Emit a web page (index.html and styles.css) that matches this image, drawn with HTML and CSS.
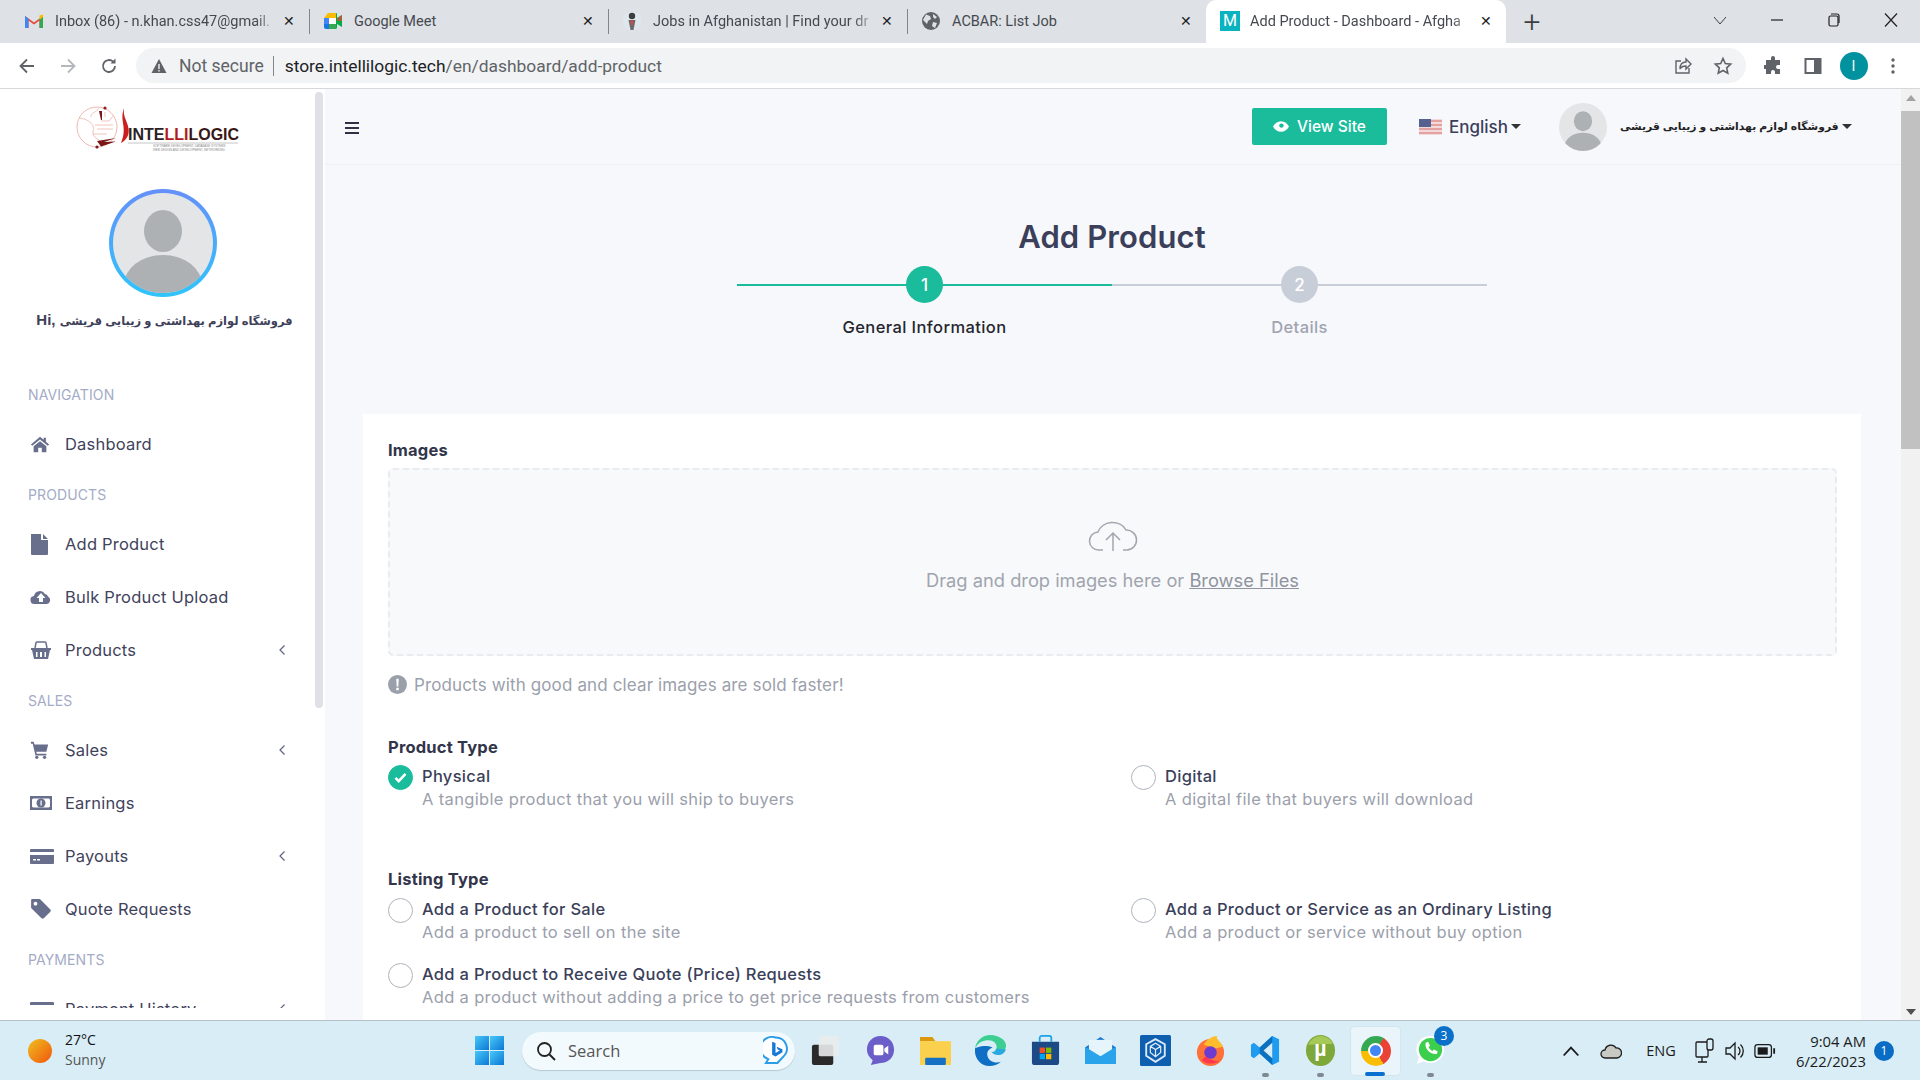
FILE: index.html
```html
<!DOCTYPE html>
<html lang="en">
<head>
<meta charset="utf-8">
<title>Add Product - Dashboard</title>
<link rel="stylesheet" href="styles.css">
</head>
<body>
<div class="screen">
  <div class="tabstrip">
    <div class="tab">
      <svg class="fav" viewBox="0 0 20 16"><path d="M1 15V3l9 6.500L19 3v12h-3.500V7.500L10 11.500 4.500 7.500V15z" fill="#ea4335"/><path d="M1 15V3l3.500 2.500V15z" fill="#4285f4"/><path d="M19 15V3l-3.500 2.500V15z" fill="#34a853"/><path d="M15.500 2.500L19 1.500V4l-3.500 2.800z" fill="#fbbc04"/></svg>
      <span class="tab-title tab-fade">Inbox (86) - n.khan.css47@gmail.</span><span class="tab-x">✕</span>
    </div>
    <div class="tab">
      <svg class="fav" viewBox="0 0 20 18"><path d="M5 1h8v5H1z" fill="#fbbc04"/><path d="M1 6h5v6H1z" fill="#4285f4"/><path d="M1 12h5v5H3a2 2 0 0 1-2-2z" fill="#1a73e8"/><path d="M6 12h7v5H6z" fill="#34a853"/><path d="M13 1a1 1 0 0 1 1 1v4l5-3v12l-5-3v3a2 2 0 0 1-1 2z" fill="#00ac47"/><path d="M6 6h7v6H6z" fill="#fff"/><path d="M14 6l5-3v6h-5z" fill="#ea4335" opacity=".7"/></svg>
      <span class="tab-title">Google Meet</span><span class="tab-x">✕</span>
    </div>
    <div class="tab">
      <svg class="fav" viewBox="0 0 20 20"><circle cx="10" cy="10" r="9.500" fill="#dfe7ee"/><circle cx="10" cy="5" r="3.200" fill="#3c3c3c"/><path d="M6.500 9h7l-1 5-1 5h-3l-1-5z" fill="#6b6b6b"/><path d="M9 9h2v5H9z" fill="#d94040"/></svg>
      <span class="tab-title tab-fade">Jobs in Afghanistan | Find your dr</span><span class="tab-x">✕</span>
    </div>
    <div class="tab">
      <svg class="fav" viewBox="0 0 20 20"><circle cx="10" cy="10" r="9" fill="#5f6368"/><path d="M5 3.500l4 1.500 1 3-3 2-1 3-4-4zM12 11l4 1-2 5-3-2zM12 3l4 3-2 2-2-2z" fill="#dee1e6"/></svg>
      <span class="tab-title">ACBAR: List Job</span><span class="tab-x">✕</span>
    </div>
    <div class="tab tab-active">
      <span class="fav-m">M</span>
      <span class="tab-title tab-fade">Add Product - Dashboard - Afgha</span><span class="tab-x">✕</span>
    </div>
    <span class="newtab">+</span>
    <div class="winctrl">
      <svg class="wc" viewBox="0 0 16 16"><path d="M2 5l6 7 6-7" fill="none" stroke="#3c4043" stroke-width="1"/></svg>
      <svg class="wc" viewBox="0 0 16 16"><path d="M2 8h12" stroke="#202124" stroke-width="1.200"/></svg>
      <svg class="wc" viewBox="0 0 16 16"><rect x="3" y="4" width="9" height="10" rx="1.500" fill="none" stroke="#202124" stroke-width="1.200"/><path d="M5 2h6a2 2 0 0 1 2 2v7" fill="none" stroke="#202124" stroke-width="1.200"/></svg>
      <svg class="wc" viewBox="0 0 16 16"><path d="M2 1.500l12 13M14 1.500l-12 13" stroke="#202124" stroke-width="1.200"/></svg>
    </div>
  </div>

  <div class="toolbar">
    <svg class="tb-nav" viewBox="0 0 20 20"><path d="M17 10H4M10 3.500L3.500 10l6.500 6.500" fill="none" stroke="#5f6368" stroke-width="1.800"/></svg>
    <svg class="tb-nav" viewBox="0 0 20 20"><path d="M3 10h13M10 3.500l6.500 6.500-6.500 6.500" fill="none" stroke="#b4b7bb" stroke-width="1.800"/></svg>
    <svg class="tb-nav tb-reload" viewBox="0 0 20 20"><path d="M16 10a6 6 0 1 1-1.800-4.300" fill="none" stroke="#5f6368" stroke-width="1.800"/><path d="M16.500 2.500v5h-5z" fill="#5f6368"/></svg>
    <div class="omnibox">
      <svg class="warn" viewBox="0 0 16 16"><path d="M8 1l7.500 14H.5z" fill="#5f6368"/><path d="M7.300 6h1.400v5H7.300zM7.300 12h1.400v1.400H7.300z" fill="#f1f3f4"/></svg>
      <span class="not-secure">Not secure</span>
      <span class="omni-sep"></span>
      <span class="url"><span class="url-host">store.intellilogic.tech</span>/en/dashboard/add-product</span>
      <svg class="omni-ic" viewBox="0 0 20 20"><path d="M8 5H3v12h13v-5" fill="none" stroke="#5f6368" stroke-width="1.400"/><path d="M7 13c0-5 3-7 6-7V3l5 5-5 5v-3c-3 0-5 1-6 3z" fill="none" stroke="#5f6368" stroke-width="1.400"/></svg>
      <svg class="omni-ic" viewBox="0 0 20 20"><path d="M10 2.500l2.300 5 5.400.6-4 3.700 1.100 5.400-4.800-2.700-4.800 2.700 1.100-5.400-4-3.700 5.400-.6z" fill="none" stroke="#5f6368" stroke-width="1.600"/></svg>
    </div>
    <svg class="tb-ic tb-ext" viewBox="0 0 20 20"><path d="M8 2a2 2 0 0 1 4 0v2h5v5h-2a2 2 0 0 0 0 4h2v5h-5v-2a2 2 0 0 0-4 0v2H3v-5H1V9h2V4h5z" fill="#5f6368"/></svg>
    <svg class="tb-ic" viewBox="0 0 20 20"><rect x="2.500" y="3" width="15" height="14" fill="none" stroke="#5f6368" stroke-width="2"/><rect x="11" y="3" width="6" height="14" fill="#5f6368"/></svg>
    <span class="profile">I</span>
    <svg class="tb-dots" viewBox="0 0 6 20"><circle cx="3" cy="4" r="1.700" fill="#5f6368"/><circle cx="3" cy="10" r="1.700" fill="#5f6368"/><circle cx="3" cy="16" r="1.700" fill="#5f6368"/></svg>
  </div>

  <div class="viewport">
    <aside class="sidebar">
      <div class="sidebar-scroll">
        <svg class="logo" viewBox="0 0 165 50" role="img">
          <circle cx="22" cy="24" r="20" fill="none" stroke="#eda79e" stroke-width=".8"/>
          <path d="M4 15c8 1 12 4 14 8s-2 6 1 10 6 3 8 8M24 5c-2 4-9 5-8 9M20 22h18M22 26h16M26 18h8l4-5M18 31h14M30 14v-5" fill="none" stroke="#efb3ab" stroke-width=".8"/>
          <circle cx="30" cy="5" r="1.600" fill="#8a2020"/><circle cx="22" cy="44" r="1.600" fill="#801818"/>
          <path d="M24 8h3v9h-1zM22 38l19-3-12 4 12-.5-15 5z" fill="#7b1616"/>
          <path d="M49 5c-5 14 4 18-3 35 7-4 9-10 7-17s-5-10-4-18z" fill="#cb1e1e"/>
          <text class="logo-main" x="53" y="37"><tspan fill="#2c2124">INTE</tspan><tspan fill="#b01c1c">LLI</tspan><tspan fill="#3a1717">LOGIC</tspan></text>
          <path d="M53 40h110" stroke="#b8b8b8" stroke-width=".8"/>
          <text class="logo-sub" x="78" y="44">SOFTWARE DEVELOPMENT, DATABASE SYSTEMS</text>
          <text class="logo-sub" x="78" y="48">WEB DESIGN AND DEVELOPMENT, NETWORKING</text>
        </svg>
        <div class="avatar-ring">
          <svg class="avatar-big" viewBox="0 0 100 100"><rect width="100" height="100" fill="#e3e5e7"/><ellipse cx="50" cy="38" rx="19" ry="21" fill="#adb1b4"/><ellipse cx="50" cy="92" rx="39" ry="30" fill="#adb1b4"/></svg>
        </div>
        <div class="hi">Hi, <span class="hi-fa">فروشگاه لوازم بهداشتی و زیبایی قریشی</span></div>

        <div class="nav-label nav-first">Navigation</div>
        <div class="nav-item"><svg class="nav-ic ic-n" viewBox="0 0 22 20"><path d="M11 2L1 10.500l1.500 1.500L11 5l8.500 7 1.500-1.500-3.500-3V3h-2.500v2.300zM4 12.500L11 7l7 5.500V19h-5v-5H9v5H4z" fill="#686f8c"/></svg><span>Dashboard</span></div>

        <div class="nav-label">Products</div>
        <div class="nav-item"><svg class="nav-ic" viewBox="0 0 22 22"><path d="M1 1h10v6h7v14a1 1 0 0 1-1 1H2a1 1 0 0 1-1-1zM13 1l5 5h-5z" fill="#686f8c"/></svg><span>Add Product</span></div>
        <div class="nav-item"><svg class="nav-ic" viewBox="0 0 22 18"><path d="M5 16a4 4 0 0 1-1-8 6 6 0 0 1 11-2 3.500 3.500 0 0 1 3 2.500 4 4 0 0 1-1 7.500zM11 5l-4.500 5H9v4h4v-4h2.500z" fill="#686f8c" fill-rule="evenodd"/></svg><span>Bulk Product Upload</span></div>
        <div class="nav-item"><svg class="nav-ic" viewBox="0 0 22 20"><path d="M1 8h20v2h-1l-2 9H4L2 10H1zM6 12v5h1.500v-5zM10 12v5h2v-5zM14.500 12v5H16v-5z" fill="#686f8c" fill-rule="evenodd"/><path d="M5 8l1-5a1 1 0 0 1 1-1h8a1 1 0 0 1 1 1l1 5" fill="none" stroke="#686f8c" stroke-width="1.500"/></svg><span>Products</span><svg class="chev" viewBox="0 0 8 12"><path d="M6.500 1.500L2 6l4.500 4.500" fill="none" stroke="#5c6280" stroke-width="1.200"/></svg></div>

        <div class="nav-label">Sales</div>
        <div class="nav-item"><svg class="nav-ic ic-n" viewBox="0 0 22 20"><path d="M1 1h3l1 3h15l-2 8H7l.4 2H18v2H6L3 3H1z" fill="#686f8c"/><circle cx="7.500" cy="18" r="1.800" fill="#686f8c"/><circle cx="16" cy="18" r="1.800" fill="#686f8c"/></svg><span>Sales</span><svg class="chev" viewBox="0 0 8 12"><path d="M6.500 1.500L2 6l4.500 4.500" fill="none" stroke="#5c6280" stroke-width="1.200"/></svg></div>
        <div class="nav-item"><svg class="nav-ic" viewBox="0 0 22 16"><path d="M0 1h22v14H0zM3 3.500a2 2 0 0 1-1 1v7a2 2 0 0 1 1 1h16a2 2 0 0 1 1-1v-7a2 2 0 0 1-1-1z" fill="#686f8c" fill-rule="evenodd"/><circle cx="11" cy="8" r="4.500" fill="#686f8c"/><path d="M10.500 5.500h1.200v5h-1.200z" fill="#fff"/></svg><span>Earnings</span></div>
        <div class="nav-item"><svg class="nav-ic wide" viewBox="0 0 24 16"><path d="M0 2a1 1 0 0 1 1-1h22a1 1 0 0 1 1 1v2H0zM0 7h24v8a1 1 0 0 1-1 1H1a1 1 0 0 1-1-1zM3 11v1.500h3V11zM7 11v1.500h3V11z" fill="#686f8c" fill-rule="evenodd"/></svg><span>Payouts</span><svg class="chev" viewBox="0 0 8 12"><path d="M6.500 1.500L2 6l4.500 4.500" fill="none" stroke="#5c6280" stroke-width="1.200"/></svg></div>
        <div class="nav-item"><svg class="nav-ic" viewBox="0 0 20 20"><path d="M1 2a1 1 0 0 1 1-1h7l9.500 9.500a1.500 1.500 0 0 1 0 2l-6 6a1.500 1.500 0 0 1-2 0L1 9zM5 3.500a1.700 1.700 0 1 0 .01 0z" fill="#686f8c" fill-rule="evenodd"/></svg><span>Quote Requests</span></div>

        <div class="nav-label">Payments</div>
        <div class="nav-item"><svg class="nav-ic wide" viewBox="0 0 24 16"><path d="M0 2a1 1 0 0 1 1-1h22a1 1 0 0 1 1 1v2H0zM0 7h24v8a1 1 0 0 1-1 1H1a1 1 0 0 1-1-1z" fill="#686f8c"/></svg><span>Payment History</span><svg class="chev" viewBox="0 0 8 12"><path d="M6.500 1.500L2 6l4.500 4.500" fill="none" stroke="#5c6280" stroke-width="1.200"/></svg></div>
      </div>
      <div class="side-thumb"></div>
    </aside>

    <main class="main">
      <header class="topbar">
        <svg class="burger" viewBox="0 0 14 12"><path d="M0 1h14M0 6h14M0 11h14" stroke="#2f3245" stroke-width="1.800"/></svg>
        <a class="viewsite"><svg class="eye" viewBox="0 0 18 12"><path d="M0 6c2-3.500 5-6 9-6s7 2.500 9 6c-2 3.500-5 6-9 6S2 9.500 0 6z" fill="#fff"/><circle cx="9.500" cy="5" r="2.500" fill="#1abc9c"/></svg>View Site</a>
        <div class="lang">
          <svg class="flag" viewBox="0 0 23 16"><rect width="23" height="16" fill="#f3d9d9"/><path d="M0 2h23M0 6h23M0 10h23M0 14h23" stroke="#e08f8f" stroke-width="1.500"/><rect width="12" height="8" fill="#55618f"/></svg>
          <span>English</span><i class="caret"></i>
        </div>
        <div class="user">
          <svg class="user-pic" viewBox="0 0 100 100"><rect width="100" height="100" fill="#e3e5e7"/><ellipse cx="50" cy="38" rx="19" ry="21" fill="#adb1b4"/><ellipse cx="50" cy="92" rx="39" ry="30" fill="#adb1b4"/></svg>
          <span class="user-name">فروشگاه لوازم بهداشتی و زیبایی قریشی</span><i class="caret"></i>
        </div>
      </header>

      <div class="body">
        <h1 class="title">Add Product</h1>
        <div class="stepper">
          <div class="step step-on"><span class="dot">1</span><span class="step-label">General Information</span></div>
          <div class="step"><span class="dot">2</span><span class="step-label">Details</span></div>
        </div>

        <section class="card">
          <div class="fld-label">Images</div>
          <div class="drop">
            <svg class="cloud" viewBox="0 0 50 32"><path d="M15 30H11a9 9 0 0 1-1-18 15 13 0 0 1 28-2 10 10 0 0 1 1 20h-4" fill="none" stroke="#a2a6ae" stroke-width="1.500"/><path d="M25 31V13M18 20l7-7 7 7" fill="none" stroke="#a2a6ae" stroke-width="1.500"/></svg>
            <p class="drop-text">Drag and drop images here or <u>Browse Files</u></p>
          </div>
          <div class="hint"><svg class="hint-ic" viewBox="0 0 20 20"><circle cx="10" cy="10" r="10" fill="#9aa0aa"/><path d="M8.700 4h2.600l-.4 8H9.100zM8.700 13.500h2.600V16H8.700z" fill="#fff"/></svg>Products with good and clear images are sold faster!</div>

          <div class="fld-label gap-type">Product Type</div>
          <div class="opts opts-type">
            <div class="opt"><span class="radio radio-on"><svg viewBox="0 0 14 12"><path d="M1.500 6.500l3.500 3.500 7.500-8" fill="none" stroke="#fff" stroke-width="2.800"/></svg></span><div><div class="opt-t">Physical</div><div class="opt-s">A tangible product that you will ship to buyers</div></div></div>
            <div class="opt"><span class="radio"></span><div><div class="opt-t">Digital</div><div class="opt-s">A digital file that buyers will download</div></div></div>
          </div>

          <div class="fld-label gap-list">Listing Type</div>
          <div class="opts opts-list">
            <div class="opt"><span class="radio"></span><div><div class="opt-t">Add a Product for Sale</div><div class="opt-s">Add a product to sell on the site</div></div></div>
            <div class="opt"><span class="radio"></span><div><div class="opt-t">Add a Product or Service as an Ordinary Listing</div><div class="opt-s">Add a product or service without buy option</div></div></div>
            <div class="opt"><span class="radio"></span><div><div class="opt-t">Add a Product to Receive Quote (Price) Requests</div><div class="opt-s">Add a product without adding a price to get price requests from customers</div></div></div>
          </div>
        </section>
      </div>
    </main>

    <div class="pagebar">
      <span class="arrow-up"></span>
      <div class="page-thumb"></div>
      <span class="arrow-down"></span>
    </div>
  </div>

  <footer class="taskbar">
    <div class="weather">
      <span class="sun"></span>
      <div class="weather-txt"><div class="temp">27°C</div><div class="cond">Sunny</div></div>
    </div>
    <div class="start"><i></i><i></i><i></i><i></i></div>
    <div class="search">
      <svg class="s-ic" viewBox="0 0 20 20"><circle cx="8.500" cy="8.500" r="6.500" fill="none" stroke="#222" stroke-width="1.800"/><path d="M13.500 13.500L19 19" stroke="#222" stroke-width="2"/></svg>
      <span>Search</span>
      <svg class="bing" viewBox="0 0 26 30"><path d="M13 1.500a11.500 11.500 0 0 1 8 20l-6 6.500H3l2.500-4A11.500 11.500 0 0 1 13 1.500z" fill="#fff" stroke="#2b9ce8" stroke-width="2"/><path d="M9.500 6l3.500 1.200v10.300l4.500-2.600-2.300-1-1-2.700 6 2.400v3.200l-7.200 4.400-3.500-1.900z" fill="#1878d8"/></svg>
    </div>
    <div class="apps">
      <div class="app"><svg viewBox="0 0 30 32"><rect x="1" y="10" width="22" height="21" rx="2" fill="#2a2a2a"/><rect x="8" y="1" width="21" height="21" rx="2" fill="#e9ebec" opacity=".9"/></svg></div>
      <div class="app"><svg viewBox="0 0 30 32"><path d="M15 1c8 0 14 6 14 14s-6 14-14 14l-10 2 2-5C3 23 1 19 1 15 1 7 7 1 15 1z" fill="#6c5ec9"/><rect x="8" y="10" width="10" height="11" rx="2" fill="#fff"/><path d="M19 14l4-3v9l-4-3z" fill="#fff"/></svg></div>
      <div class="app"><svg viewBox="0 0 30 30"><path d="M0 2h12l3 4H0z" fill="#dc9a0a"/><rect y="6" width="30" height="23" fill="#fbd04c"/><rect x="5" y="22" width="20" height="7" rx="1" fill="#1671c4"/></svg></div>
      <div class="app"><svg viewBox="0 0 30 30"><path d="M15 0C7 0 1 6 0 13c3-6 8-8 13-8s8 3 8 7c0 2-2 3-3 3h10c2-2 2-4 2-5C30 5 23 0 15 0z" fill="#3ccf91"/><path d="M0 13c-1 9 5 17 14 17 4 0 8-1 11-4-6 2-12-1-13-6-1-4 2-7 5-8-8-3-15 0-17 1z" fill="#0f6fc4"/><path d="M21 13c-1 3-4 4-5 3 1 3 5 4 9 3 3-1 4-3 5-5z" fill="#2aa8e0"/></svg></div>
      <div class="app"><svg viewBox="0 0 28 32"><path d="M0 7h28v21a3 3 0 0 1-3 3H3a3 3 0 0 1-3-3z" fill="#1b4a86"/><path d="M8 7V3a2 2 0 0 1 2-2h8a2 2 0 0 1 2 2v4" fill="none" stroke="#1aa3e8" stroke-width="1.800"/><rect x="8" y="13" width="5.500" height="5.500" fill="#f25022"/><rect x="14.500" y="13" width="5.500" height="5.500" fill="#7fba00"/><rect x="8" y="19.500" width="5.500" height="5.500" fill="#00a4ef"/><rect x="14.500" y="19.500" width="5.500" height="5.500" fill="#ffb900"/></svg></div>
      <div class="app"><svg viewBox="0 0 32 28"><path d="M0 11L16 0l16 11v17H0z" fill="#1a77cf"/><path d="M4 3h24v17H4z" fill="#e6f4fb"/><path d="M0 10l16 10 16-10v18H0z" fill="#2aa3ea"/></svg></div>
      <div class="app"><svg viewBox="0 0 30 30"><rect width="30" height="30" rx="1.500" fill="#0f5fb0"/><path d="M15 4l9 5v11l-9 6-9-6V9z" fill="none" stroke="#dbe9f8" stroke-width="1.800"/><path d="M10 11l5 3 5-3M15 14v7M10 11l5-3 5 3v6l-5 4-5-4z" fill="none" stroke="#dbe9f8" stroke-width="1.200"/></svg></div>
      <div class="app"><svg viewBox="0 0 30 32"><circle cx="15" cy="18" r="14" fill="#ff7139"/><path d="M8 10c2-4 8-9 14-9-2 3 3 5 6 11l-8 2z" fill="#ffbd2e"/><circle cx="15" cy="18" r="6.500" fill="#6e3bd0"/><path d="M6 26c4 4 12 5 18 1-5 0-10-1-14-5z" fill="#ff3750"/></svg></div>
      <div class="app"><svg viewBox="0 0 30 32"><path d="M22 1l7 3.500v23L22 31 9 19l-6 5-3-2v-12l3-2 6 5z" fill="#1f9cf0"/><path d="M22 1v30L9 19V13z" fill="#0a70c0"/><path d="M22 8v16l-9-8z" fill="#d8edf6"/></svg></div>
      <div class="app"><svg viewBox="0 0 30 32"><ellipse cx="15" cy="16" rx="15" ry="16" fill="#7fa83a"/><path d="M2 10c3-6 9-9 13-9 5 0 10 3 13 8z" fill="#a7c957"/><text class="ut" x="15" y="22">µ</text></svg></div>
      <div class="app app-on"><span class="chrome"><span></span></span></div>
      <div class="app"><svg viewBox="0 0 30 32"><path d="M15 1a14 14 0 0 1 0 28c-3 0-5-1-7-2l-7 3 2-7A14 14 0 0 1 15 1z" fill="#fff"/><circle cx="15" cy="15" r="12" fill="#3ccf4e"/><path d="M10 8l2.500-1 2 4-1.500 1.500c.8 2 2 3.200 4 4L18.500 15l4 2-1 2.500c-6 1.500-13-5.500-11.500-11.500z" fill="#fff"/></svg><b class="wa-badge">3</b></div>
    </div>
    <div class="tray">
      <span class="tr tr-40"><svg viewBox="0 0 16 10"><path d="M1.500 9L8 2l6.500 7" fill="none" stroke="#1b1b1b" stroke-width="1.600"/></svg></span>
      <span class="tr tr-40"><svg class="tr-cloud" viewBox="0 0 22 18"><path d="M5 16a4 4 0 0 1 0-8 6 6 0 0 1 11-2 5 5 0 0 1 1 10z" fill="#c9c9c4" stroke="#1f1f1f" stroke-width="1.300"/></svg></span>
      <span class="tr eng">ENG</span>
      <span class="tr tr-30"><svg class="tr-net" viewBox="0 0 20 26"><rect x="1" y="4" width="12" height="15" rx="1" fill="none" stroke="#1b1b1b" stroke-width="1.300"/><rect x="12" y="1" width="6" height="11" rx="2" fill="#d8edf6" stroke="#1b1b1b" stroke-width="1.300"/><path d="M7 19v5M3 24h9" stroke="#1b1b1b" stroke-width="1.300"/></svg></span>
      <span class="tr tr-30"><svg viewBox="0 0 22 22"><path d="M2 8h4l5-5v16l-5-5H2z" fill="none" stroke="#1b1b1b" stroke-width="1.300"/><path d="M14 7a5 5 0 0 1 0 8M16.500 4.500a9 9 0 0 1 0 13" fill="none" stroke="#1b1b1b" stroke-width="1.300"/></svg></span>
      <span class="tr tr-30"><svg viewBox="0 0 24 16"><rect x="1" y="1" width="18" height="14" rx="3" fill="none" stroke="#1b1b1b" stroke-width="1.400"/><rect x="4" y="4" width="11" height="8" fill="#1b1b1b"/><path d="M21 5h2v6h-2z" fill="#1b1b1b"/></svg></span>
      <div class="clock"><div>9:04 AM</div><div>6/22/2023</div></div>
      <span class="notif">1</span>
    </div>
  </footer>
</div>
</body>
</html>
```

FILE: styles.css
```css
* { box-sizing: border-box; }
html, body { margin: 0; height: 100%; overflow: hidden; }
body { font-family: "Inter", "DejaVu Sans", sans-serif; color: #3b3f5a; }
.screen { width: 1920px; height: 1080px; display: flex; flex-direction: column; overflow: hidden; background: #fff; }

/* browser chrome */
.tabstrip { height: 43px; background: #dee1e6; display: flex; align-items: stretch; padding-left: 10px; flex: none; }
.tab { width: 299px; display: flex; align-items: center; padding: 0 13px 1px 14px; font: 14px "Roboto", sans-serif; color: #45494f; position: relative; }
.tab + .tab::before { content: ""; position: absolute; left: 0; top: 9px; bottom: 9px; width: 1px; background: #80868b; }
.tab-active { background: #fff; border-radius: 10px 10px 0 0; color: #45494f; width: 300px; }
.tab-active::before { display: none; }
.fav { width: 20px; height: 20px; flex: none; margin-right: 11px; }
.fav-m { width: 20px; height: 20px; flex: none; margin-right: 10px; background: #0bb3c0; color: #fff; font: 16px/20px "Roboto", sans-serif; text-align: center; }
.tab-title { flex: 1; min-width: 0; white-space: nowrap; font-size: 14.500px; }
.tab-fade { -webkit-mask-image: linear-gradient(90deg, #000 90%, transparent); mask-image: linear-gradient(90deg, #000 90%, transparent); }
.tab-x { width: 14px; font-size: 14px; color: #202124; text-align: center; flex: none; margin-left: 4px; }
.newtab { font: 300 30px/43px "Roboto", sans-serif; color: #3c4043; margin-left: 16px; width: 20px; text-align: center; }
.winctrl { margin-left: auto; display: flex; align-items: center; padding: 0 21px 4px 0; gap: 41px; }
.wc { width: 16px; height: 16px; display: block; }

.toolbar { height: 46px; flex: none; background: #fff; border-bottom: 1px solid #d6d8db; display: flex; align-items: center; padding: 0 18px 0 17px; }
.tb-nav { width: 20px; height: 20px; margin-right: 21px; flex: none; }
.tb-reload { margin-right: 17px; }
.omnibox { width: 1610px; height: 35px; background: #f1f3f4; border-radius: 18px; display: flex; align-items: center; padding: 0 13px 0 15px; flex: none; }
.warn { width: 16px; height: 16px; margin-right: 12px; flex: none; }
.not-secure { font: 17.500px "Roboto", sans-serif; color: #5f6368; }
.omni-sep { width: 1px; height: 20px; background: #80868b; margin: 0 11px 0 9px; }
.url { font: 17.400px "Roboto", sans-serif; color: #5f6368; flex: 1; white-space: nowrap; }
.url-host { color: #202124; }
.omni-ic { width: 20px; height: 20px; margin-left: 20px; flex: none; }
.tb-ic { width: 20px; height: 20px; flex: none; margin-left: 20px; }
.tb-ext { margin-left: 16.500px; }
.profile { width: 28px; height: 28px; border-radius: 50%; background: #00929f; color: #fff; font: 14px/28px "Roboto", sans-serif; text-align: center; margin-left: 17px; flex: none; }
.tb-dots { width: 6px; height: 20px; margin-left: 22px; flex: none; }

.viewport { flex: 1; min-height: 0; display: flex; overflow: hidden; }

/* sidebar */
.sidebar { width: 325px; flex: none; background: #fff; position: relative; padding-bottom: 12px; display: flex; }
.sidebar-scroll { flex: 1; min-width: 0; overflow: hidden; padding-top: 14px; display: flex; flex-direction: column; }
.side-thumb { position: absolute; left: 315px; top: 3px; width: 8px; height: 616px; background: #dfe1e6; border-radius: 4px; }
.logo { display: block; width: 165px; height: 50px; margin-left: 75px; flex: none; }
.logo-main { font: 700 16px "Liberation Sans", sans-serif; }
.logo-sub { font: 3px "Liberation Sans", sans-serif; fill: #888; }
.avatar-ring { width: 108px; height: 108px; margin: 36px 0 0 109px; border-radius: 50%; padding: 4px; background: linear-gradient(#6490fa, #2fc5fb); flex: none; }
.avatar-big { display: block; width: 100px; height: 100px; border-radius: 50%; }
.hi { margin-top: 11px; height: 24px; text-align: center; font: 700 15px/24px "Liberation Sans", "DejaVu Sans", sans-serif; color: #3d4058; white-space: nowrap; flex: none; padding-left: 4px; }
.hi-fa { font-size: 11.500px; }
.nav-label { height: 47px; flex: none; display: flex; align-items: center; padding: 2px 0 0 28px; font-size: 14px; letter-spacing: .1px; text-transform: uppercase; color: #a4abc6; }
.nav-first { margin-top: 38px; }
.nav-item { height: 53px; flex: none; display: flex; align-items: center; padding: 0 38px 0 30px; font-size: 16.500px; letter-spacing: .2px; color: #3f435c; }
.nav-ic { width: 22px; height: 22px; margin-right: 13px; flex: none; }
.nav-ic.ic-n { width: 20px; margin-right: 15px; }
.nav-ic.wide { width: 24px; margin-right: 11px; }
.chev { width: 8px; height: 12px; margin-left: auto; flex: none; position: relative; left: -1px; }

/* main */
.main { flex: 1; min-width: 0; background: #f7f8fc; display: flex; flex-direction: column; overflow: hidden; }
.topbar { height: 76px; flex: none; border-bottom: 1px solid #eef0f3; display: flex; align-items: center; padding: 0 52px 0 20px; }
.burger { width: 14px; height: 12px; margin-top: 3px; flex: none; }
.viewsite { margin-left: 893px; width: 135px; height: 37px; flex: none; background: #1abc9c; border-radius: 2px; color: #fff; font-size: 15.500px; font-weight: 500; display: flex; align-items: center; justify-content: center; gap: 8px; white-space: nowrap; }
.eye { width: 16px; height: 11px; flex: none; }
.lang { margin-left: 32px; display: flex; align-items: center; flex: none; font-size: 17px; font-weight: 500; color: #3b3f5a; }
.flag { width: 23px; height: 16px; margin-right: 7px; flex: none; }
.caret { width: 0; height: 0; border: 5px solid transparent; border-top-color: #333; border-bottom: 0; margin-left: 3px; display: inline-block; flex: none; }
.user { margin-left: 38px; display: flex; align-items: center; flex: none; }
.user-pic { width: 48px; height: 48px; border-radius: 50%; margin-right: 13px; flex: none; }
.user-name { font: 700 10.800px "Liberation Sans", "DejaVu Sans", sans-serif; color: #222; white-space: nowrap; }

.body { flex: 1; min-height: 0; padding: 52px 40px 0 38px; }
.title { margin: 0; text-align: center; font-size: 31px; font-weight: 600; line-height: 40px; color: #3b3f5a; letter-spacing: .1px; }
.stepper { width: 750px; margin: 9px auto 0; display: grid; grid-template-columns: 1fr 1fr; }
.step { position: relative; display: flex; flex-direction: column; align-items: center; }
.step::before { content: ""; position: absolute; left: 0; right: 0; top: 17.500px; height: 2px; background: #c8ced8; }
.step-on::before { background: #1abc9c; }
.dot { position: relative; width: 37px; height: 37px; border-radius: 50%; background: #c8ced8; color: #fff; font-size: 17px; font-weight: 500; display: flex; align-items: center; justify-content: center; }
.step-on .dot { background: #1abc9c; }
.step-label { margin-top: 12px; line-height: 24px; font-size: 16.500px; font-weight: 500; letter-spacing: .4px; color: #a0a3b0; }
.step-on .step-label { color: #25262e; }

.card { margin-top: 75px; background: #fff; padding: 24px 24px 0 25px; height: 700px; }
.fld-label { font-size: 16.500px; font-weight: 700; line-height: 24px; letter-spacing: .2px; color: #32354a; }
.drop { margin-top: 6px; height: 188px; background: #f8f9fb; border: 2px dashed #e9ebef; border-radius: 5px; display: flex; flex-direction: column; align-items: center; padding-top: 50px; }
.cloud { width: 50px; height: 32px; display: block; }
.drop-text { margin: 15px 0 0; font-size: 18.300px; line-height: 26px; color: #a0a4ae; }
.drop-text u { color: #8f949e; }
.hint { margin-top: 17px; line-height: 24px; display: flex; align-items: center; font-size: 17px; letter-spacing: .13px; color: #9ba0ab; gap: 7px; }
.hint-ic { width: 19px; height: 19px; margin-top: -2px; flex: none; }
.gap-type { margin-top: 38px; }
.gap-list { margin-top: 55px; }
.opts { display: grid; grid-template-columns: 743px 1fr; row-gap: 18px; }
.opts-type { margin-top: 5px; }
.opts-list { margin-top: 6px; }
.opt { display: flex; }
.radio { width: 25px; height: 25px; border: 1.500px solid #afb4bc; border-radius: 50%; margin: 1px 9px 0 0; flex: none; display: flex; align-items: center; justify-content: center; }
.radio-on { background: #1abc9c; border-color: #1abc9c; }
.radio-on svg { width: 13px; height: 11px; }
.opt-t { font-size: 16.500px; line-height: 24px; font-weight: 500; letter-spacing: .3px; color: #3b3f5a; }
.opt-s { font-size: 16.500px; line-height: 23.500px; letter-spacing: .34px; color: #9ba0ab; white-space: nowrap; }

/* page scrollbar */
.pagebar { width: 19px; flex: none; background: #f1f1f1; display: flex; flex-direction: column; align-items: center; }
.arrow-up, .arrow-down { width: 0; height: 0; border: 5px solid transparent; flex: none; }
.arrow-up { border-bottom: 6px solid #a3a3a3; border-top: 0; margin-top: 6px; }
.arrow-down { border-top: 6px solid #505050; border-bottom: 0; margin: auto 0 5px; }
.page-thumb { width: 100%; height: 338px; background: #c1c1c1; margin-top: 10px; flex: none; }

/* taskbar */
.taskbar { height: 60px; flex: none; background: #d8edf6; border-top: 1px solid #b5c3c9; display: flex; align-items: center; font-family: "Open Sans", sans-serif; }
.weather { width: 462px; display: flex; align-items: center; padding: 0 0 2px 28px; flex: none; }
.sun { width: 24px; height: 24px; border-radius: 50%; background: linear-gradient(135deg, #f0c020, #f06a10 80%); margin: 2px 13px 0 0; flex: none; }
.temp { font-size: 14px; line-height: 20px; color: #111; }
.cond { font-size: 14px; line-height: 20px; color: #555; }
.start { width: 29px; height: 29px; display: grid; grid-template-columns: 1fr 1fr; gap: 1px; margin: 0 18px 0 13px; flex: none; }
.start i { background: linear-gradient(135deg, #48c8f8, #0a78d6); }
.search { width: 273px; height: 38px; border-radius: 19px; background: #f3fafd; box-shadow: 0 1px 1px #b7cad4; display: flex; align-items: center; padding: 0 7px 0 14px; font-size: 16.500px; color: #555; flex: none; }
.s-ic { width: 20px; height: 20px; margin-right: 12px; flex: none; }
.bing { width: 25px; height: 29px; margin-left: auto; flex: none; }
.apps { display: flex; margin-left: 3px; flex: none; }
.app { width: 55px; height: 58px; display: flex; align-items: center; justify-content: center; position: relative; }
.app svg { width: 31px; height: 31px; position: relative; }
.app:nth-child(9)::after, .app:nth-child(10)::after, .app:nth-child(12)::after { content: ""; position: absolute; bottom: 3px; left: 24px; width: 7px; height: 4px; border-radius: 2px; background: #7f8a90; }
.app-on::before { content: ""; position: absolute; left: 3px; right: 3px; top: 5px; bottom: 5px; background: #e9f5fa; border-radius: 4px; box-shadow: 0 0 0 1px #d3e5ed; }
.app-on::after { content: ""; position: absolute; bottom: 4px; left: 17px; width: 20px; height: 4px; border-radius: 2px; background: #0a70d0; }
.chrome { position: relative; width: 30px; height: 30px; border-radius: 50%; background: conic-gradient(from 30deg, #ea4335 0 120deg, #fbbc04 120deg 240deg, #34a853 240deg 360deg); display: flex; align-items: center; justify-content: center; }
.chrome span { width: 15px; height: 15px; border-radius: 50%; background: #4285f4; border: 2px solid #fff; }
.wa-badge { position: absolute; left: 31px; top: 4px; width: 20px; height: 20px; border-radius: 50%; background: #0a70c8; color: #fff; font: 12px/20px "Open Sans", sans-serif; text-align: center; }
.ut { font: 700 22px "Liberation Sans", sans-serif; fill: #fff; text-anchor: middle; }
.tray { margin-left: auto; display: flex; align-items: center; padding-right: 26px; flex: none; font-size: 14.800px; color: #1b1b1b; }
.tr { display: flex; align-items: center; justify-content: center; flex: none; }
.tr-40 { width: 40px; }
.tr-40 svg { width: 18px; height: 14px; }
.tr-40 svg.tr-cloud { width: 22px; height: 18px; }
.tr-30 { width: 30px; }
.tr-30 svg { width: 22px; height: 22px; }
.tr-30 svg.tr-net { height: 26px; }
.eng { width: 60px; font-size: 14.500px; margin-right: -1px; }
.clock { width: 86px; text-align: right; line-height: 20px; font-size: 14.800px; }
.notif { width: 20px; height: 20px; border-radius: 50%; background: #0a6cc4; color: #fff; font-size: 12px; line-height: 20px; text-align: center; margin-left: 8px; }
```
